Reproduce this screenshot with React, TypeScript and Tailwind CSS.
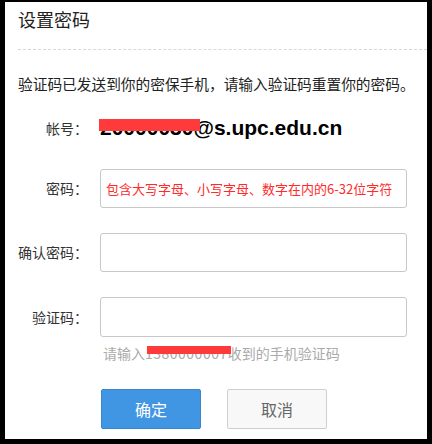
import React from "react";

const cjk = { fontFamily: '"Noto Sans CJK SC", "Noto Sans", sans-serif' };

function Row({ label, children, className = "" }: { label: string; children: React.ReactNode; className?: string }) {
  return (
    <div className={`flex items-center ${className}`}>
      <div className="w-[83px] text-right text-[14px] text-[#333] shrink-0">{label}</div>
      <div className="ml-[12px]">{children}</div>
    </div>
  );
}

export default function App() {
  return (
    <div
      className="w-[432px] h-[444px] bg-white border-black border-l-[5px] border-r-[5px] border-b-[5px] border-t-[2px] overflow-hidden"
      style={cjk}
    >
      <div className="pl-[13px] pt-[4px] text-[18px] leading-[26px] text-[#222]">设置密码</div>
      <div className="ml-[13px] mt-[17px] border-t border-dashed border-[#d8d8d8]" />

      <p className="pl-[13px] mt-[24px] text-[14.7px] leading-[20px] text-[#222] whitespace-nowrap">
        验证码已发送到你的密保手机，请输入验证码重置你的密码。
      </p>

      <Row label="帐号：" className="mt-[14px] h-[40px]">
        <div className="relative">
          <span
            className="text-[21px] font-bold text-black leading-[26px]"
            style={{ fontFamily: '"Liberation Sans", Arial, sans-serif' }}
          >
            20000030@s.upc.edu.cn
          </span>
          <div className="absolute left-[-1px] top-[4px] w-[101px] h-[12px] bg-[#ff3a3a]" />
        </div>
      </Row>

      <Row label="密码：" className="mt-[21px]">
        <div className="w-[307px] h-[39px] rounded-[3px] border border-[#c8c8c8] flex items-center pl-[5px] text-[13px] text-[#ff2a2a]">
          包含大写字母、小写字母、数字在内的6-32位字符
        </div>
      </Row>

      <Row label="确认密码：" className="mt-[25px]">
        <div className="w-[307px] h-[39px] rounded-[3px] border border-[#c8c8c8]" />
      </Row>

      <Row label="验证码：" className="mt-[25px]">
        <div className="w-[307px] h-[40px] rounded-[3px] border border-[#c8c8c8]" />
      </Row>

      <div className="pl-[98px] mt-[6px] text-[14px] leading-[20px] text-[#aaa] relative whitespace-nowrap">
        <span>
          请输入<span className="tracking-[0.5px]">1380000007</span>收到的手机验证码
        </span>
        <div className="absolute left-[142px] top-[3px] w-[84px] h-[8px] bg-[#ff3a3a]" />
      </div>

      <div className="flex pl-[96px] mt-[26px] gap-[26px]">
        <button className="w-[100px] h-[40px] rounded-[2px] bg-[#4196e4] border border-[#3a85cc] text-white text-[16px]">
          确定
        </button>
        <button className="w-[100px] h-[40px] rounded-[2px] bg-[#f8f8f8] border border-[#cfcfcf] text-[#666] text-[16px]">
          取消
        </button>
      </div>
    </div>
  );
}
